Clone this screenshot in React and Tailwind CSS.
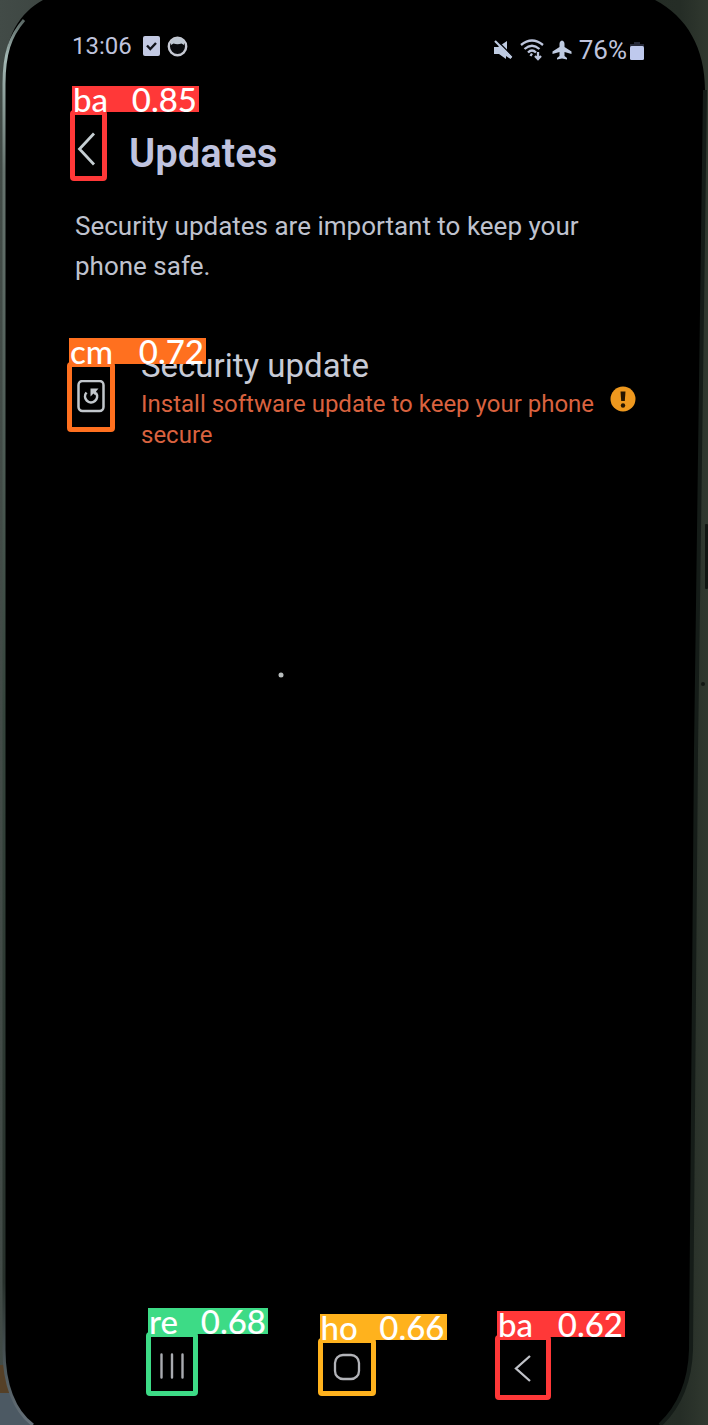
import React from "react";

const tones = {
  red: { box: "border-[#ff3838]", label: "bg-[#ff3838]" },
  orange: { box: "border-[#ff701f]", label: "bg-[#ff701f]" },
  green: { box: "border-[#3ddb86]", label: "bg-[#3ddb86]" },
  amber: { box: "border-[#ffb21d]", label: "bg-[#ffb21d]" },
};

function Detection({ tone, name, score, className, labelWidth, children }) {
  return (
    <div className={`relative shrink-0 rounded-[4px] border-[5px] ${tones[tone].box} ${className}`}>
      <div
        className={`absolute bottom-[calc(100%+3px)] left-[-3px] z-10 flex h-[26px] items-center justify-between pr-[2px] pl-px text-[33px] leading-[26px] font-medium text-white ${labelWidth} ${tones[tone].label}`}
        style={{ fontFamily: "Lato, sans-serif" }}
      >
        <span>{name}</span>
        <span>{score}</span>
      </div>
      {children}
    </div>
  );
}

function PhoneBody() {
  return (
    <svg
      className="absolute inset-0 h-full w-full"
      viewBox="0 0 708 1425"
      preserveAspectRatio="none"
      fill="none"
      aria-hidden="true"
    >
      <defs>
        <linearGradient id="desk" x1="0" y1="0" x2="708" y2="0" gradientUnits="userSpaceOnUse">
          <stop offset="0" stopColor="#424b47" />
          <stop offset="0.5" stopColor="#1c211e" />
          <stop offset="0.96" stopColor="#252d26" />
          <stop offset="1" stopColor="#30382f" />
        </linearGradient>
        <linearGradient id="rim" x1="0" y1="0" x2="0" y2="1425" gradientUnits="userSpaceOnUse">
          <stop offset="0" stopColor="#303a37" />
          <stop offset="0.04" stopColor="#a3b8b4" />
          <stop offset="0.12" stopColor="#66736e" />
          <stop offset="0.5" stopColor="#35443c" />
          <stop offset="0.9" stopColor="#27302b" />
          <stop offset="1" stopColor="#66717a" />
        </linearGradient>
      </defs>
      <rect width="708" height="1425" fill="url(#desk)" />
      <path d="M0 1365H5L12 1393H0Z" fill="#554027" />
      <path d="M0 1393H10L35 1425H0Z" fill="#4c5963" />
      <path
        d="M43 0C20 13 4 35 4 80V1350C4 1384 14 1411 33 1425H660C680 1406 690 1382 691 1350L696 750L705 90C705 48 687 17 655 0Z"
        fill="#000"
      />
      <path d="M24 20C10 36 4 54 4 84V1350C4 1384 14 1411 33 1425" stroke="url(#rim)" strokeWidth="3" />
      <path d="M705 90L696 750L691 1350C690 1382 680 1406 660 1425" stroke="#151c18" strokeWidth="4" />
      <rect x="705" y="524" width="3" height="65" rx="1" fill="#101511" />
      <circle cx="703" cy="684" r="2" fill="#121713" />
      <circle cx="281" cy="675" r="2.5" fill="#b9bdbd" />
    </svg>
  );
}

function StatusBar() {
  return (
    <div className="flex items-start justify-between pt-[32px] pr-[64px] pl-[72px] text-[#bfc3dc]">
      <div className="flex h-[28px] items-center gap-[11px] text-[24px] leading-7">
        <span>13:06</span>
        <svg width="17" height="20" viewBox="0 0 17 20" aria-hidden="true">
          <rect width="17" height="20" rx="2" fill="#c3c9e3" />
          <path d="M4 9.5L7.3 13L13 7" stroke="#11131b" strokeWidth="2.4" fill="none" />
        </svg>
        <svg className="-ml-1" width="21" height="21" viewBox="0 0 21 21" aria-hidden="true">
          <circle cx="10.5" cy="10.5" r="8.7" stroke="#c6c9d3" strokeWidth="2.4" fill="#080a0d" />
          <path d="M4 5L6 3Q10.500 0 15 3L17 5V9L14.500 7.500Q10.500 9 6.500 7.500L4 9Z" fill="#bdc7d2" />
        </svg>
      </div>
      <div className="mt-1 flex h-[28px] items-center gap-[7px] text-[26px] leading-7">
        <svg width="20" height="20" viewBox="0 0 20 20" aria-hidden="true">
          <path d="M1 7H5L14 1V11L19 17L17.500 19L13 16V19L6 14H1Z" fill="#bfcbe1" />
          <path d="M4.500 1L20 16.500" stroke="#05060a" strokeWidth="1.500" />
          <path d="M2 1L18.500 17.500" stroke="#bfcbe1" strokeWidth="2.200" />
        </svg>
        <svg width="25" height="22" viewBox="0 0 25 22" fill="none" stroke="#bdc5dc" strokeWidth="2.300" aria-hidden="true">
          <path d="M1 6Q12 -3 23 6M4.500 10Q12 3.500 19.500 10M8 13.500Q12 9.500 16 13.500M10.500 17L12 14.500" />
          <path d="M18 13V20M15 17L18 20L21 17" />
        </svg>
        <svg width="20" height="20" viewBox="0 0 20 20" fill="#bfcbe1" aria-hidden="true">
          <path d="M10 0.500Q12.500 1 12.500 4V7L19.500 11.500V14L12.500 12V16L15 18V19.500L10 18.500L5 19.500V18L7.500 16V12L0.500 14V11.500L7.500 7V4Q7.500 1 10 0.500Z" />
        </svg>
        <div className="flex items-center gap-[3px]">
          <span>76%</span>
          <svg width="14" height="19" viewBox="0 0 14 19" aria-hidden="true">
            <path d="M4 1H10V3H14V6H0V3H4Z" fill="#252837" />
            <rect y="5" width="14" height="14" rx="1.500" fill="#bfc9ed" />
          </svg>
        </div>
      </div>
    </div>
  );
}

export default function App() {
  return (
    <div
      className="relative flex min-h-screen flex-col overflow-hidden bg-black"
      style={{ fontFamily: "Roboto, sans-serif" }}
    >
      <PhoneBody />
      <div className="relative flex flex-1 flex-col">
        <StatusBar />

        <header className="mt-[46px] flex items-center gap-[22px] pl-[70px]">
          <Detection tone="red" name="ba" score="0.85" className="h-[71px] w-[37px]" labelWidth="w-[127px]">
            <button type="button" aria-label="Back" className="flex h-full w-full items-center justify-start pt-[6px] pl-[2px]">
              <svg className="shrink-0" width="20" height="34" viewBox="0 0 20 34" fill="none" aria-hidden="true">
                <path d="M17 1.500L2.500 17L17 32.500" stroke="#c5ced2" strokeWidth="2.800" />
              </svg>
            </button>
          </Detection>
          <h1 className="mt-4 text-[40px] leading-[48px] font-semibold text-[#bfc3df]">Updates</h1>
        </header>

        <main className="pr-[70px]">
          <p className="mt-[25px] pl-[75px] text-[26px] leading-[40px] text-[#bfc2ce]">
            Security updates are important to keep your phone safe.
          </p>

          <section className="mt-[62px] flex items-start pl-[67px]">
            <Detection tone="orange" name="cm" score="0.72" className="mt-[14px] h-[70px] w-[48px]" labelWidth="w-[137px]">
              <div className="flex h-full items-center justify-center">
                <svg width="28" height="34" viewBox="0 0 28 34" fill="none" stroke="#c2c7cc" aria-hidden="true">
                  <rect x="1.500" y="1" width="25" height="30" rx="4" strokeWidth="2.500" />
                  <path d="M9.500 12.500A6 6 0 1 0 19 13" strokeWidth="2.600" />
                  <path d="M13.500 8.500H21.500L19 11.500L20 13.500L18 15L16.500 13.500L13.500 16.500Z" fill="#c2c7cc" stroke="none" />
                </svg>
              </div>
            </Detection>
            <div className="ml-[26px] min-w-0 flex-1">
              <h2 className="text-[33px] leading-[36px] text-[#c8cbd6]">Security update</h2>
              <p className="mt-[5px] text-[24px] leading-[31px] text-[#d9623f]">
                Install software update to keep your phone secure
              </p>
            </div>
            <svg className="mt-[38px] mr-[2px] shrink-0" width="26" height="26" viewBox="0 0 26 26" aria-label="Attention needed">
              <circle cx="13" cy="13" r="12.500" fill="#ee981e" />
              <path d="M10.500 5.500H15.500L14.800 15H11.200Z" fill="#251500" />
              <circle cx="13" cy="19.500" r="2.200" fill="#251500" />
            </svg>
          </section>
        </main>

        <nav className="mt-auto flex items-end justify-between pr-[157px] pb-[25px] pl-[146px]">
          <Detection tone="green" name="re" score="0.68" className="mb-[4px] h-[64px] w-[52px]" labelWidth="w-[120px]">
            <button type="button" aria-label="Recent apps" className="flex h-full w-full items-center justify-center pt-1">
              <svg width="26" height="26" viewBox="0 0 26 26" stroke="#a9abb0" strokeWidth="2.400" strokeLinecap="round" aria-hidden="true">
                <path d="M2.500 1.500V24.500M13 1.500V24.500M23.500 1.500V24.500" />
              </svg>
            </button>
          </Detection>
          <Detection tone="amber" name="ho" score="0.66" className="mb-[4px] h-[58px] w-[58px]" labelWidth="w-[127px]">
            <button type="button" aria-label="Home" className="flex h-full w-full items-center justify-center">
              <svg width="28" height="28" viewBox="0 0 28 28" fill="none" stroke="#b2b3b8" strokeWidth="2.300" aria-hidden="true">
                <rect x="2" y="2" width="24" height="24" rx="8" />
              </svg>
            </button>
          </Detection>
          <Detection tone="red" name="ba" score="0.62" className="h-[65px] w-[56px]" labelWidth="w-[128px]">
            <button type="button" aria-label="Back" className="flex h-full w-full items-center justify-center">
              <svg width="18" height="28" viewBox="0 0 18 28" fill="none" stroke="#c0c2c8" strokeWidth="2.300" aria-hidden="true">
                <path d="M16 2L2 14.500L16 27" />
              </svg>
            </button>
          </Detection>
        </nav>
      </div>
    </div>
  );
}
